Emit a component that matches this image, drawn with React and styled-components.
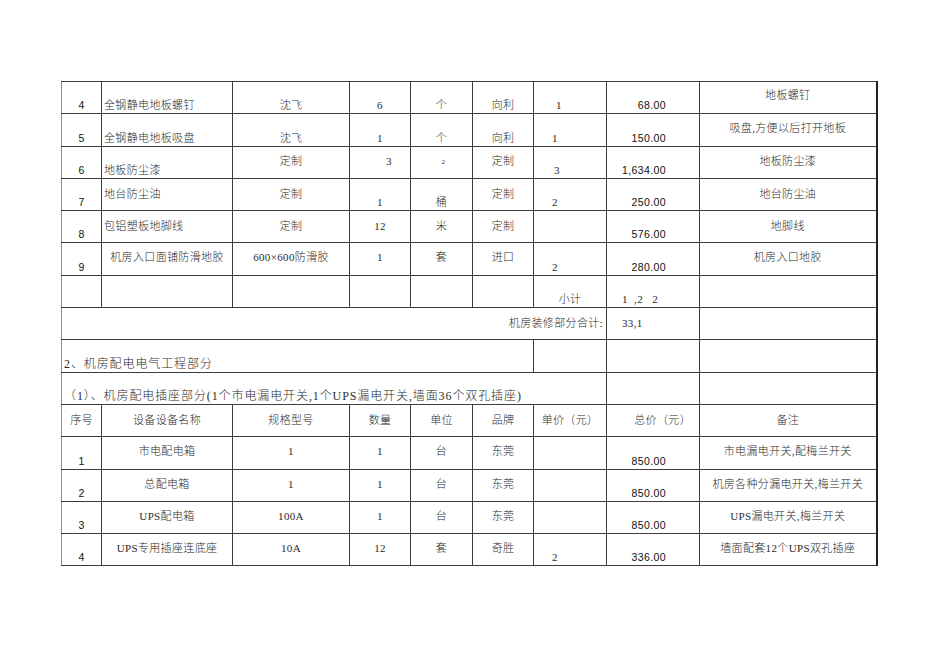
import React from "react";
import styled, { createGlobalStyle } from "styled-components";

const GlobalStyle = createGlobalStyle`
  html, body {
    margin: 0;
    padding: 0;
    background: #ffffff;
  }
  body {
    font-family: "Liberation Serif", "Noto Sans CJK SC", serif;
    color: #2b2b2b;
  }
`;

const Page = styled.div`
  width: 950px;
  height: 672px;
  padding: 81px 0 0 61px;
  box-sizing: border-box;
  overflow: hidden;
`;

const Sheet = styled.table`
  border-collapse: collapse;
  table-layout: fixed;
  width: 815px;
`;

const Row = styled.tr`
  height: 32.3px;
`;

const Cell = styled.td`
  border: 1px solid #3d3d3d;
  border-left-color: ${(p) => (p.soft ? "#8c8c8c" : "#3d3d3d")};
  padding: 0 ${(p) => p.pr ?? 2}px 1px ${(p) => p.pl ?? 2}px;
  text-align: ${(p) => p.align || "center"};
  vertical-align: ${(p) => p.valign || "middle"};
  font-family: ${(p) =>
    p.sans
      ? '"Liberation Sans", Arial, sans-serif'
      : '"Liberation Serif", "Noto Sans CJK SC", serif'};
  font-size: ${(p) => (p.sans ? "10.5px" : p.big ? "12px" : "11px")};
  letter-spacing: ${(p) => (p.sans ? "0.4px" : p.big ? "0.9px" : "0.35px")};
  font-weight: ${(p) => (p.sans ? 400 : 300)};
  color: ${(p) => (p.sans ? "#111" : "#2b2b2b")};
  line-height: 14px;
  white-space: nowrap;
  overflow: visible;

  &:last-child {
    border-right: 2px solid #222;
  }
`;

const Tiny = styled.span`
  font-size: 7px;
`;

// column widths
const cols = [40, 131, 117, 61, 62, 61, 73, 93, 177];

// shorthand: b = bottom, m = middle
const B = "bottom";
const M = "middle";

const rows = [
  [
    { t: "4", sans: true, v: B },
    { t: "全钢静电地板螺钉", a: "left", v: B },
    { t: "沈飞", v: B },
    { t: "6", v: B },
    { t: "个", v: B },
    { t: "向利", v: B },
    { t: "1", a: "left", pl: 22, v: B },
    { t: "68.00", sans: true, a: "right", pr: 33, v: B },
    { t: "地板螺钉", v: M, pb: 6 },
  ],
  [
    { t: "5", sans: true, v: B },
    { t: "全钢静电地板吸盘", a: "left", v: B },
    { t: "沈飞", v: B },
    { t: "1", v: B },
    { t: "个", v: B },
    { t: "向利", v: B },
    { t: "1", a: "left", pl: 18, v: B },
    { t: "150.00", sans: true, a: "right", pr: 33, v: B },
    { t: "吸盘,方便以后打开地板", v: M, pb: 4 },
  ],
  [
    { t: "6", sans: true, v: B },
    { t: "地板防尘漆", a: "left", v: B },
    { t: "定制", v: M, pb: 3 },
    { t: "3", v: M, pl: 20, pb: 3 },
    { t: <Tiny>2</Tiny>, v: M, pl: 6, pb: 3 },
    { t: "定制", v: M, pb: 3 },
    { t: "3", a: "left", pl: 20, v: B },
    { t: "1,634.00", sans: true, a: "right", pr: 33, v: B },
    { t: "地板防尘漆", v: M, pb: 3 },
  ],
  [
    { t: "7", sans: true, v: B },
    { t: "地台防尘油", a: "left", v: M, pb: 2 },
    { t: "定制", v: M, pb: 2 },
    { t: "1", v: B },
    { t: "桶", v: B },
    { t: "定制", v: M, pb: 2 },
    { t: "2", a: "left", pl: 18, v: B },
    { t: "250.00", sans: true, a: "right", pr: 33, v: B },
    { t: "地台防尘油", v: M, pb: 2 },
  ],
  [
    { t: "8", sans: true, v: B },
    { t: "包铝塑板地脚线", a: "left", v: M, pb: 2 },
    { t: "定制", v: M, pb: 2 },
    { t: "12", v: M, pb: 2 },
    { t: "米", v: M, pb: 2 },
    { t: "定制", v: M, pb: 2 },
    { t: "" },
    { t: "576.00", sans: true, a: "right", pr: 33, v: B },
    { t: "地脚线", v: M, pb: 2 },
  ],
  [
    { t: "9", sans: true, v: B },
    { t: "机房入口面铺防滑地胶", v: M, pb: 4 },
    { t: "600×600防滑胶", v: M, pb: 4 },
    { t: "1", v: M, pb: 4 },
    { t: "套", v: M, pb: 4 },
    { t: "进口", v: M, pb: 4 },
    { t: "2", a: "left", pl: 18, v: B },
    { t: "280.00", sans: true, a: "right", pr: 33, v: B },
    { t: "机房入口地胶", v: M, pb: 4 },
  ],
  [
    { t: "" },
    { t: "" },
    { t: "" },
    { t: "" },
    { t: "" },
    { t: "" },
    { t: "小计", v: B },
    { t: "1\u00a0\u00a0,2\u00a0\u00a0\u00a02", a: "left", pl: 15, v: B },
    { t: "" },
  ],
  [
    { t: "机房装修部分合计:", span: 7, a: "right", pr: 3, v: M },
    { t: "33,1", a: "left", pl: 15, v: M },
    { t: "" },
  ],
  [
    { t: "2、机房配电电气工程部分", span: 6, a: "left", big: true, v: B },
    { t: "" },
    { t: "" },
    { t: "" },
  ],
  [
    {
      t: "（1）、机房配电插座部分(1个市电漏电开关,1个UPS漏电开关,墙面36个双孔插座)",
      span: 7,
      a: "left",
      big: true,
      v: B,
    },
    { t: "" },
    { t: "" },
  ],
  [
    { t: "序号", v: M },
    { t: "设备设备名称", v: M },
    { t: "规格型号", v: M },
    { t: "数量", v: M },
    { t: "单位", v: M },
    { t: "品牌", v: M },
    { t: "单价（元）", v: M },
    { t: "总价（元）", a: "right", pr: 8, v: M },
    { t: "备注", v: M },
  ],
  [
    { t: "1", sans: true, v: B },
    { t: "市电配电箱", v: M, pb: 3 },
    { t: "1", v: M, pb: 3 },
    { t: "1", v: M, pb: 3 },
    { t: "台", v: M, pb: 3 },
    { t: "东莞", v: M, pb: 3 },
    { t: "" },
    { t: "850.00", sans: true, a: "right", pr: 33, v: B },
    { t: "市电漏电开关,配梅兰开关", v: M, pb: 3 },
  ],
  [
    { t: "2", sans: true, v: B },
    { t: "总配电箱", v: M, pb: 3 },
    { t: "1", v: M, pb: 3 },
    { t: "1", v: M, pb: 3 },
    { t: "台", v: M, pb: 3 },
    { t: "东莞", v: M, pb: 3 },
    { t: "" },
    { t: "850.00", sans: true, a: "right", pr: 33, v: B },
    { t: "机房各种分漏电开关,梅兰开关", v: M, pb: 3 },
  ],
  [
    { t: "3", sans: true, v: B },
    { t: "UPS配电箱", v: M, pb: 3 },
    { t: "100A", v: M, pb: 3 },
    { t: "1", v: M, pb: 3 },
    { t: "台", v: M, pb: 3 },
    { t: "东莞", v: M, pb: 3 },
    { t: "" },
    { t: "850.00", sans: true, a: "right", pr: 33, v: B },
    { t: "UPS漏电开关,梅兰开关", v: M, pb: 3 },
  ],
  [
    { t: "4", sans: true, v: B },
    { t: "UPS专用插座连底座", v: M, pb: 3 },
    { t: "10A", v: M, pb: 3 },
    { t: "12", v: M, pb: 3 },
    { t: "套", v: M, pb: 3 },
    { t: "奇胜", v: M, pb: 3 },
    { t: "2", a: "left", pl: 18, v: B },
    { t: "336.00", sans: true, a: "right", pr: 33, v: B },
    { t: "墙面配套12个UPS双孔插座", v: M, pb: 3 },
  ],
];

export default function App() {
  return (
    <Page>
      <GlobalStyle />
      <Sheet>
        <colgroup>
          {cols.map((w, i) => (
            <col key={i} style={{ width: w }} />
          ))}
        </colgroup>
        <tbody>
          {rows.map((row, r) => {
            let colIndex = 0;
            return (
              <Row key={r}>
                {row.map((c, i) => {
                  const start = colIndex;
                  colIndex += c.span || 1;
                  return (
                    <Cell
                      key={i}
                      colSpan={c.span}
                      align={c.a}
                      valign={c.v}
                      pl={c.pl}
                      pr={c.pr}
                      sans={c.sans}
                      big={c.big}
                      soft={start <= 2}
                      style={c.pb ? { paddingBottom: c.pb } : undefined}
                    >
                      {c.t}
                    </Cell>
                  );
                })}
              </Row>
            );
          })}
        </tbody>
      </Sheet>
    </Page>
  );
}
